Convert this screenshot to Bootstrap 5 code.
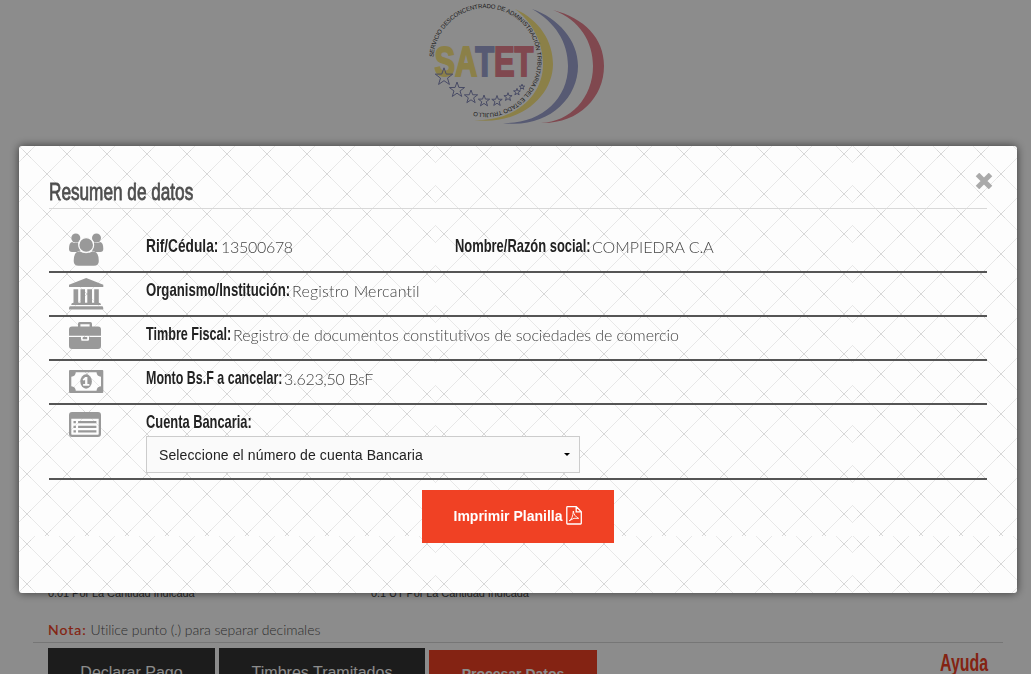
<!DOCTYPE html>
<html lang="es">
<head>
<meta charset="utf-8">
<meta name="viewport" content="width=device-width, initial-scale=1">
<title>SATET - Resumen de datos</title>
<link href="https://cdn.jsdelivr.net/npm/bootstrap@5.3.0/dist/css/bootstrap.min.css" rel="stylesheet">
<style>
body{height:674px;overflow:hidden;background:#fff;font-family:Lato,sans-serif;font-weight:300;color:#444}
.arial{font-family:"Liberation Sans",Arial,sans-serif}
.logo-box{height:580px}
.logo-box svg{display:block;margin-left:420px}
.form-zone{padding-left:48px}
.hints{height:40px;font-size:11px;line-height:14px;padding-top:6px;color:#444;font-weight:400;letter-spacing:-.07px}
.hint-a{width:323px}
.note{height:22px;font-size:14px;line-height:20px;color:#555;letter-spacing:-.06px}
.note b{color:#f04124;font-weight:400;letter-spacing:1px;-webkit-text-stroke:.2px #f04124}
.page-rule{margin:0 28px 0 33px;height:1px;background:#d8d8d8}
.bar{padding:5px 43px 0 48px;gap:4px}
.bar .btn{border-radius:0;border:0;height:50px;font-size:16px;color:#fff;padding:0;line-height:50px}
.btn-dark1{background:#333;width:167px}.btn-dark2{background:#333;width:206px}
.bar .btn-red{background:#f04124;width:168px;height:48px;margin-top:2px;font-size:14px;font-weight:700;line-height:48px}
.cond{font-family:"Liberation Sans",Arial,sans-serif;display:inline-block;white-space:nowrap;transform-origin:0 50%}
.help{color:#f04124;font-weight:700;font-size:24px;line-height:30px;width:48px;transform:scaleX(.665)}
.backdrop-soft{--bs-backdrop-bg:#000;--bs-backdrop-opacity:.45}
.summary{width:998px;max-width:none;margin:146px 0 0 19px}
.summary .modal-content{height:447px;border:0;border-radius:3px;padding:30px;box-shadow:0 0 10px rgba(0,0,0,.6);color:#444;
background:#fdfdfd url("data:image/svg+xml,%3Csvg xmlns='http://www.w3.org/2000/svg' width='417' height='390'%3E%3Cdefs%3E%3Cpattern id='p' width='40' height='40' patternUnits='userSpaceOnUse'%3E%3Cpath d='M0 0L40 40M-4 20L20 -4M-4 60L60 -4' stroke='%23e8e8e8' fill='none'/%3E%3Cpath d='M4 4l8 8M12 4l-8 8M24 24l8 8M32 24l-8 8' stroke='%23d8d8d8'/%3E%3C/pattern%3E%3C/defs%3E%3Crect width='417' height='390' fill='url(%23p)'/%3E%3C/svg%3E")}
.title-line{height:33px;border-bottom:1px solid #d8d8d8}
.title-line h2{font-size:24px;line-height:32px;margin:0;color:#4d4d4d;font-weight:400;transform:scaleX(.716);-webkit-text-stroke:.8px #4d4d4d}
.close-x{top:27px;right:24px;width:18px;height:16px;padding:0;border:0;background:none;line-height:0}
.item{height:44px;border-bottom:2px solid #555;font-size:16px;line-height:24px}
.item-first{margin-top:20px}
.item-last{height:75px}
.ico{width:97px;padding-left:20px}
.ico svg{display:block;fill:#999}
.item .cond{font-weight:700;font-size:18.5px;color:#222;vertical-align:top;line-height:22px}
.item span+span{display:inline-block;vertical-align:top;white-space:nowrap;letter-spacing:-.065px}
.line{padding-top:6px}
.w1{width:75px;transform:scaleX(.741)}.w2{width:137px;transform:scaleX(.698)}.w3{width:146px;transform:scaleX(.712)}
.w4{width:87px;transform:scaleX(.682)}.w5{width:138px;transform:scaleX(.674)}.w6{width:105px;transform:scaleX(.695)}
.pick{width:434px;height:37px;border:1px solid #ccc;background:#fafafa;padding:0 9px 0 12px;font-size:14px;color:#222;margin-top:2px;font-weight:400;letter-spacing:.12px}
.caret{border:3px solid transparent;border-top:3px solid #000;border-bottom:0}
.print{width:192px;height:53px;border-radius:0;background:#f04124;color:#fff;font-size:14px;font-weight:700;margin:10px auto 0;gap:4px;padding:0;border:0}
.print svg{margin-top:-3px}
</style>
</head>
<body>
<main>
<header class="logo-box">
<svg width="190" height="130" viewBox="420 0 190 130">
<path fill="#fde983" d="M515 9C540 20 553 42 553 64C553 96 520 126 474 120C512 122 543 98 543 64C543 42 532 22 515 9Z"/>
<path fill="#9ea5d1" d="M532 9C558 18 578 40 578 66C578 100 546 129 503 123C540 124 568 100 568 66C568 42 555 22 532 9Z"/>
<path fill="#e98390" d="M553 10C584 18 604 38 604 66C604 98 578 124 541 123C570 122 593 98 593 66C593 42 580 20 553 10Z"/>
<path id="ring" fill="none" d="M433.5 57A52 52.5 0 1 1 471 111"/>
<text font-family="Liberation Sans" font-weight="400" font-size="6" fill="#333"><textPath href="#ring" textLength="254">SERVICIO DESCONCENTRADO DE ADMINISTRACIÓN TRIBUTARIA DEL ESTADO TRUJILLO</textPath></text>
<text x="434.5" y="76" font-family="Liberation Sans" font-weight="700" font-size="43" textLength="99" lengthAdjust="spacingAndGlyphs" stroke-width="1.8"><tspan fill="#fde983" stroke="#fde983">SA</tspan><tspan fill="#9ea5d1" stroke="#9ea5d1">T</tspan><tspan fill="#e98390" stroke="#e98390">ET</tspan></text>
<defs><path id="st" d="M0-10L2.4-3.2 9.5-3.1 3.8 1.2 5.9 8.1 0 4-5.9 8.1-3.8 1.2-9.5-3.1-2.4-3.2Z" vector-effect="non-scaling-stroke"/></defs>
<g fill="none" stroke="#8489b8" stroke-width="1"><use href="#st" transform="translate(444 77) scale(.92)"/><use href="#st" transform="translate(457 90) scale(.8)"/><use href="#st" transform="translate(471 97) scale(.7)"/><use href="#st" transform="translate(484 101) scale(.6)"/><use href="#st" transform="translate(497 101) scale(.55)"/><use href="#st" transform="translate(508 97) scale(.43)"/><use href="#st" transform="translate(517 92) scale(.36)"/><use href="#st" transform="translate(522 87) scale(.28)"/></g>
</svg>
</header>
<div class="form-zone">
<div class="hints arial d-flex"><span class="hint-a">0.01 Por La Cantidad Indicada</span><span>0.1 UT Por La Cantidad Indicada</span></div>
<div class="note"><b>Nota:</b> Utilice punto (.) para separar decimales</div>
</div>
<div class="page-rule"></div>
<div class="bar d-flex align-items-start">
<button class="btn btn-dark1 arial">Declarar Pago</button><button class="btn btn-dark2 arial">Timbres Tramitados</button><button class="btn btn-red arial">Procesar Datos</button>
<span class="cond help ms-auto">Ayuda</span>
</div>
</main>
<div class="modal-backdrop show backdrop-soft"></div>
<div class="modal d-block overflow-hidden" tabindex="-1">
<div class="modal-dialog summary">
<div class="modal-content">
<button class="close-x position-absolute" aria-label="Cerrar"><svg width="18" height="16" viewBox="0 0 18 16"><path d="M2.5 1.5L15.5 14.5M15.5 1.5L2.5 14.5" stroke="#aaa" stroke-width="5"/></svg></button>
<div class="title-line"><h2 class="cond">Resumen de datos</h2></div>
<div class="item item-first d-flex">
<div class="ico"><svg width="35" height="34" viewBox="0 0 35 34" style="margin-top:4px"><circle cx="6.8" cy="5" r="4.5"/><circle cx="27.5" cy="5" r="4.5"/><path d="M3 9Q6 11 9.3 9.3 8.8 14 12 17.5 9.5 17.8 8 19H3Q0 19 0 16 0 9.5 3 9ZM31.3 9Q28.3 11 25 9.3 25.5 14 22.3 17.5 24.8 17.8 26.3 19H31.3Q34.3 19 34.3 16 34.3 9.5 31.3 9Z"/><circle cx="17.2" cy="12" r="7.4" stroke="#fdfdfd" stroke-width="1.2"/><path d="M10.5 18.2Q17.2 22.5 23.8 18.2 29.8 18.5 29.8 28 29.8 32.8 25 32.8H9.5Q4.7 32.8 4.7 28 4.7 18.5 10.5 18.2Z"/></svg></div>
<div class="line" style="width:309px"><span class="cond w1">Rif/Cédula:</span><span style="letter-spacing:-.3px">13500678</span></div>
<div class="line"><span class="cond w2">Nombre/Razón social:</span><span style="letter-spacing:0">COMPIEDRA C.A</span></div>
</div>
<div class="item d-flex">
<div class="ico"><svg width="35" height="32" viewBox="0 0 35 32" style="margin-top:5px"><path d="M17.2 0L34.3 6.8V9H0V6.8ZM4.5 11.2H9.2V24.8H11.5V11.2H16V24.8H18.3V11.2H23V24.8H25.2V11.2H29.8V24.8Q32 24.8 32 27H2.2Q2.2 24.8 4.5 24.8ZM1.2 28.2H33.2Q34.3 28.2 34.3 31.5H0Q0 28.2 1.2 28.2Z"/></svg></div>
<div class="line"><span class="cond w3">Organismo/Institución:</span><span style="letter-spacing:.18px">Registro Mercantil</span></div>
</div>
<div class="item d-flex">
<div class="ico"><svg width="33" height="28" viewBox="0 0 33 28" style="margin-top:5px"><path fill-rule="evenodd" d="M9 4.5V1.7Q9 0 10.7 0H21.3Q23 0 23 1.7V4.5H29Q32 4.5 32 7.5V13.8H0V7.5Q0 4.5 3 4.5ZM11.4 2.3V4.5H20.6V2.3ZM0 15H12V17.5Q12 18.8 13.2 18.8H18.8Q20 18.8 20 17.5V15H32V24Q32 27 29 27H3Q0 27 0 24ZM13.8 15H18.2V17.2H13.8Z"/></svg></div>
<div class="line"><span class="cond w4">Timbre Fiscal:</span><span style="letter-spacing:-.05px">Registro de documentos constitutivos de sociedades de comercio</span></div>
</div>
<div class="item d-flex">
<div class="ico"><svg width="35" height="24" viewBox="0 0 35 24" style="margin-top:9px"><path fill-rule="evenodd" d="M1 0H33.3Q34.3 0 34.3 1V22Q34.3 23 33.3 23H1Q0 23 0 22V1Q0 0 1 0ZM6.8 2.3Q6.5 6.5 2.3 6.8V16.2Q6.5 16.5 6.8 20.7H27.5Q27.8 16.5 32 16.2V6.8Q27.8 6.5 27.5 2.3Z"/><ellipse cx="17.1" cy="11.5" rx="5.8" ry="7.2"/><path fill="#fdfdfd" d="M16.2 7H18.4V13.9H20.4V15.8H14.1V13.9H16.1V9.8L14.8 10.8 13.6 9.4Z"/></svg></div>
<div class="line"><span class="cond w5">Monto Bs.F a cancelar:</span><span style="letter-spacing:-.3px">3.623,50 BsF</span></div>
</div>
<div class="item item-last d-flex">
<div class="ico"><svg width="33" height="26" viewBox="0 0 33 26" style="margin-top:7px"><path fill-rule="evenodd" d="M3 0H29Q32 0 32 3V22Q32 25 29 25H3Q0 25 0 22V3Q0 0 3 0ZM2.3 6.8V22Q2.3 22.8 3 22.8H29Q29.7 22.8 29.7 22V6.8ZM4.5 9.1H6.9V11.3H4.5ZM9.1 9.1H27.4V11.3H9.1ZM4.5 13.7H6.9V15.9H4.5ZM9.1 13.7H27.4V15.9H9.1ZM4.5 18.2H6.9V20.4H4.5ZM9.1 18.2H27.4V20.4H9.1Z"/></svg></div>
<div class="line"><div style="height:23px"><span class="cond w6">Cuenta Bancaria:</span></div>
<div class="pick arial d-flex align-items-center justify-content-between"><span>Seleccione el número de cuenta Bancaria</span><i class="caret"></i></div></div>
</div>
<button class="btn print arial d-flex align-items-center justify-content-center">Imprimir Planilla <svg width="16" height="19" viewBox="0 0 16 19" fill="none" stroke="#fff" stroke-width="1.3"><path d="M.8 1.4Q.8.7 1.5.7H10.3L15.3 5.7V17.3Q15.3 18 14.6 18H1.5Q.8 18 .8 17.3ZM10.2.8V5.8H15.2"/><path stroke-width=".9" d="M7.3 5Q7.9 10 12.7 12.4Q8 11 3.2 14.8Q6.9 12.8 7.3 5Z"/></svg></button>
</div>
</div>
</div>
<script src="https://cdn.jsdelivr.net/npm/bootstrap@5.3.0/dist/js/bootstrap.bundle.min.js"></script>
</body>
</html>
